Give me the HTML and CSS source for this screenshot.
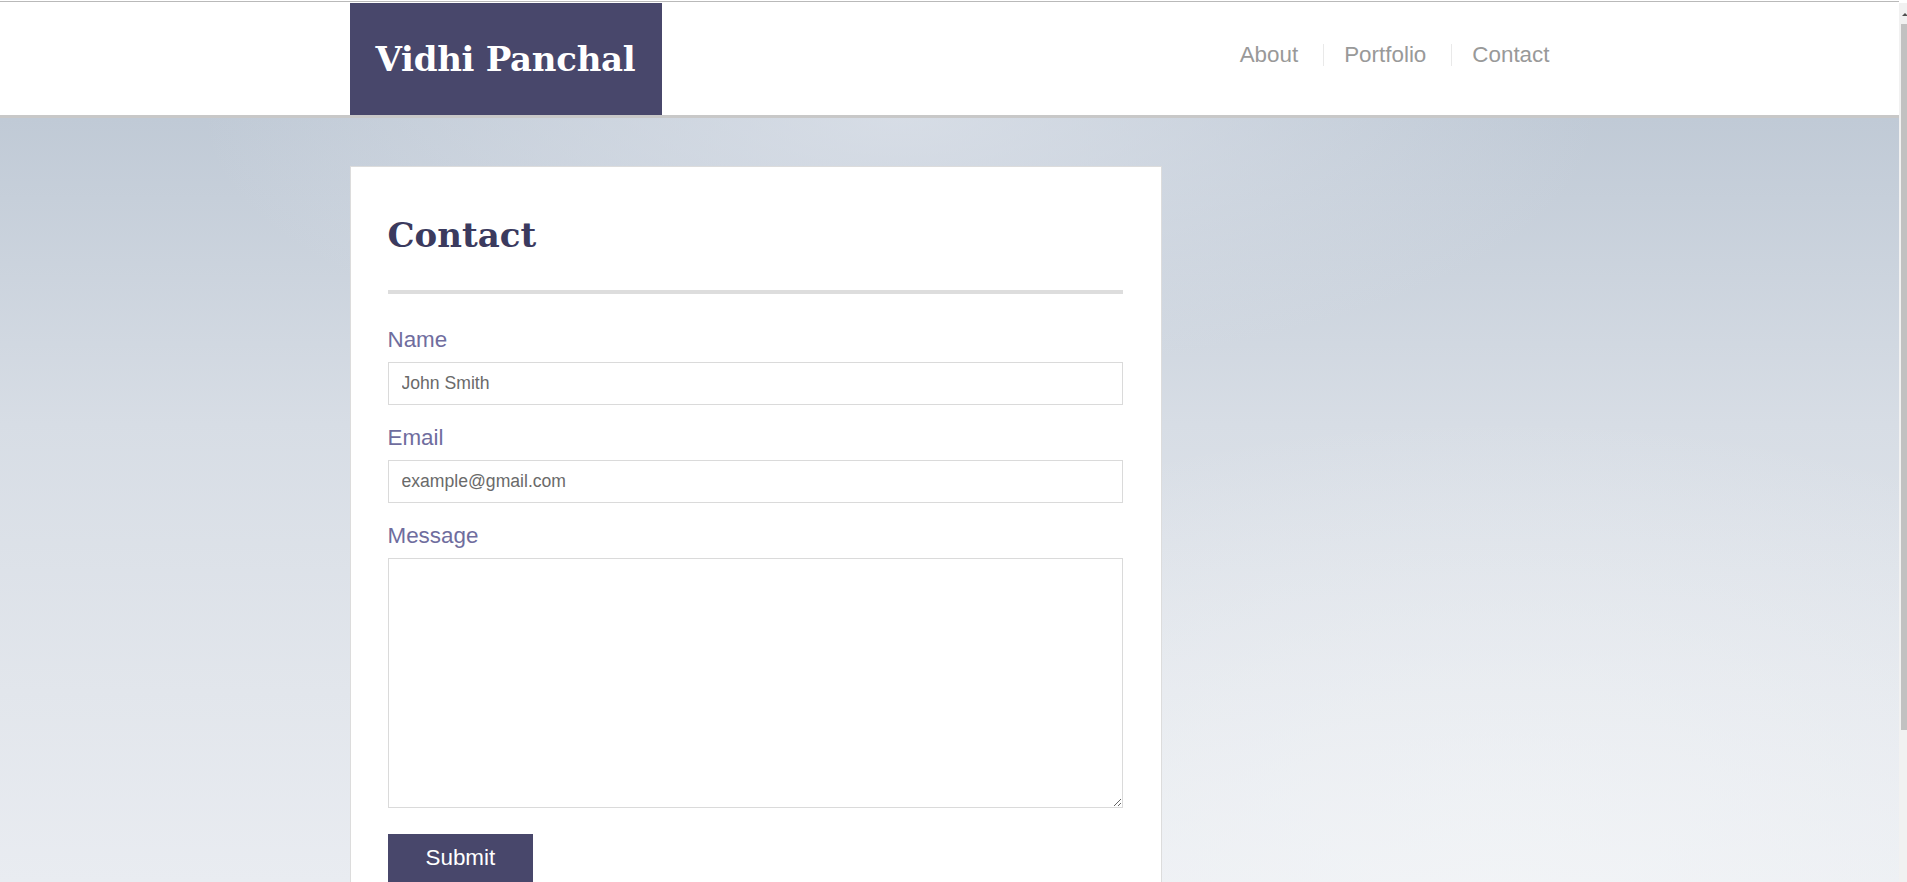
FILE: index.html
```html
<!DOCTYPE html>
<html lang="en">
<head>
<meta charset="utf-8">
<title>Vidhi Panchal - Contact</title>
<link rel="stylesheet" href="styles.css">
</head>
<body>
<div class="frame-line"></div>
<header class="site-header">
  <div class="container header-inner">
    <a class="logo" href="#">Vidhi Panchal</a>
    <nav class="nav">
      <ul class="nav-list">
        <li class="nav-item"><a href="#">About</a></li>
        <li class="nav-item"><a href="#">Portfolio</a></li>
        <li class="nav-item"><a href="#">Contact</a></li>
      </ul>
    </nav>
  </div>
</header>
<main class="page">
  <div class="container">
    <section class="card">
      <h2 class="card-title">Contact</h2>
      <hr class="divider">
      <form class="contact-form">
        <label class="field-label" for="name">Name</label>
        <input class="field-input" id="name" type="text" value="John Smith">
        <label class="field-label" for="email">Email</label>
        <input class="field-input" id="email" type="email" value="example@gmail.com">
        <label class="field-label" for="message">Message</label>
        <textarea class="field-textarea" id="message"></textarea>
        <button class="submit-btn" type="submit">Submit</button>
      </form>
    </section>
  </div>
</main>
<div class="fake-scrollbar">
  <div class="scroll-arrow"></div>
  <div class="scroll-thumb"></div>
</div>
</body>
</html>
```
FILE: styles.css
```css
html, body {
  margin: 0;
  padding: 0;
  height: 100%;
  overflow: hidden;
}
body {
  background: #fff;
  font-family: "Liberation Sans", Arial, sans-serif;
  margin-right: 8px;
}
.frame-line {
  height: 1px;
  border-top: 1px solid #fff;
  background: #b9b9b9;
}
.container {
  width: 1200px;
  margin: 0 auto;
}
.site-header {
  background: #fff;
  padding-top: 1px;
  border-bottom: 3px solid #c8c8c8;
}
.header-inner {
  display: flex;
  justify-content: space-between;
  align-items: flex-start;
}
.logo {
  display: flex;
  align-items: center;
  justify-content: center;
  width: 312px;
  height: 112px;
  background: #48476b;
  color: #fff;
  text-decoration: none;
  font-family: "DejaVu Serif", Georgia, serif;
  font-weight: bold;
  font-size: 34px;
  letter-spacing: -0.3px;
}
.nav {
  padding-top: 41px;
}
.nav-list {
  display: flex;
  list-style: none;
  margin: 0;
  padding: 0;
}
.nav-item {
  padding: 0 25px 0 20px;
  line-height: 22px;
  font-size: 22.4px;
}
.nav-item + .nav-item {
  border-left: 1px solid #e9e9e9;
}
.nav-item:last-child {
  padding-right: 0;
}
.nav-item a {
  color: #999;
  text-decoration: none;
}
.page {
  height: calc(100vh - 118px);
  overflow: hidden;
  padding-top: 48px;
  box-sizing: border-box;
  background:
    radial-gradient(ellipse 700px 260px at 900px 0px, rgba(222,227,235,0.75), rgba(222,227,235,0) 100%),
    radial-gradient(ellipse 900px 500px at 1500px 800px, rgba(244,246,248,0.8), rgba(244,246,248,0) 100%),
    linear-gradient(to bottom, #c0cad6 0%, #d7dde5 40%, #e2e6ec 75%, #e9ecf1 100%);
}
.card {
  width: 812px;
  box-sizing: border-box;
  background: #fff;
  border: 1px solid #dcdcdc;
  padding: 37px 38px 0 37px;
  height: 720px;
}
.card-title {
  margin: 11px 0 0;
  font-family: "DejaVu Serif", Georgia, serif;
  font-weight: bold;
  font-size: 34px;
  line-height: 40px;
  color: #3b3a5e;
}
.divider {
  margin: 35px 0 0;
  height: 4px;
  border: 0;
  background: #dddddd;
}
.contact-form {
  display: flex;
  flex-direction: column;
  align-items: flex-start;
  padding-top: 33px;
}
.field-label {
  font-size: 22.4px;
  color: #6f6d9e;
  margin-bottom: 9px;
}
.field-input {
  width: 100%;
  height: 43px;
  box-sizing: border-box;
  border: 1px solid #dadada;
  padding: 0 13px;
  margin: 0 0 20px;
  font-family: "Liberation Sans", Arial, sans-serif;
  font-size: 17.6px;
  color: #6a6a6a;
  outline: none;
}
.field-textarea {
  width: 100%;
  height: 250px;
  box-sizing: border-box;
  border: 1px solid #dadada;
  margin: 0 0 26px;
  padding: 10px 13px;
  font-family: "Liberation Sans", Arial, sans-serif;
  font-size: 17.6px;
  color: #666;
  outline: none;
}
.submit-btn {
  background: #48476b;
  color: #fff;
  border: 0;
  padding: 11px 38px 14px;
  font-family: "Liberation Sans", Arial, sans-serif;
  font-size: 22.4px;
  line-height: 26px;
}
.fake-scrollbar {
  position: fixed;
  top: 3px;
  right: 0;
  bottom: 0;
  width: 8px;
  background: #f1f1f1;
}
.scroll-arrow {
  height: 21px;
  position: relative;
}
.scroll-arrow::after {
  content: "";
  position: absolute;
  left: 3px;
  top: 10px;
  border-left: 3px solid transparent;
  border-right: 3px solid transparent;
  border-bottom: 3px solid #505050;
}
.scroll-thumb {
  margin-left: 2px;
  height: 706px;
  background: #c1c1c1;
}
```
